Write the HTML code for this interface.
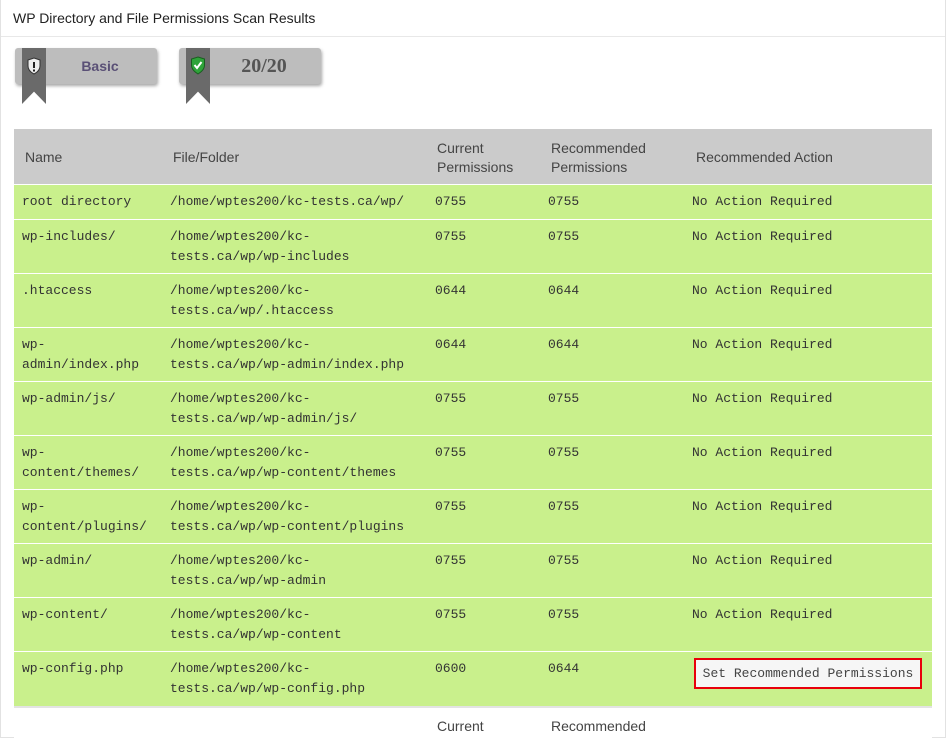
<!DOCTYPE html>
<html><head><meta charset="utf-8"><style>
*{margin:0;padding:0;box-sizing:border-box}
body{width:948px;height:723px;overflow:hidden;background:#fff;position:relative;font-family:"Liberation Sans",sans-serif}
.box{position:absolute;left:0;top:-2px;width:946px;height:740px;border:1px solid #e2e2e2;border-top:none}
.title{position:absolute;left:13px;top:10px;font-size:14px;color:#222}
.sep{position:absolute;left:1px;top:36px;width:944px;height:1px;background:#e8e8e8}
.badge{position:absolute;top:48px;width:142px;height:36px;background:#bdbdbd;border-radius:3px;box-shadow:1px 2px 3px rgba(0,0,0,.35)}
.rib{position:absolute;top:48px;width:24px;height:56px;background:#6a6a6a;clip-path:polygon(0 0,100% 0,100% 100%,50% 78%,0 100%)}
.btxt{position:absolute;top:0;height:36px;line-height:36px;left:28px;right:0;text-align:center}
.tbl{position:absolute;left:14px;top:129px;width:918px}
.hd{position:absolute;left:0;top:0;width:918px;height:55px;background:#cbcbcb;color:#444;font-size:14px}
.hd div,.ft div{position:absolute;line-height:19px}
.row{position:absolute;left:0;width:918px;background:#c9f08c;font-family:"Liberation Mono",monospace;font-size:13px;color:#333;line-height:20px}
.row div{position:absolute;top:7px}
.c1{left:8px;width:140px}.c2{left:156px;width:260px}.c3{left:421px}.c4{left:534px}.c5{left:678px}
.btn{position:absolute;left:680px;top:6px;width:228px;height:31px;border:2px solid #e8000b;background:#f6f6f6;font-family:"Liberation Mono",monospace;font-size:13px;color:#444;line-height:27px;text-align:center}
.ft{position:absolute;left:14px;top:706px;width:918px;height:40px;border-top:2px solid #e3e3e3;color:#444;font-size:14px;background:#fff}
</style></head><body>
<div class="box"></div>
<div class="title">WP Directory and File Permissions Scan Results</div>
<div class="sep"></div>
<div class="badge" style="left:15px"><div class="btxt" style="font-weight:bold;font-size:14px;color:#5a5076">Basic</div></div>
<div class="rib" style="left:22px"></div>
<svg style="position:absolute;left:26px;top:57px" width="16" height="18" viewBox="0 0 16 18"><path d="M8 1 L14 3 L14 9 C14 13 11 15.5 8 17 C5 15.5 2 13 2 9 L2 3 Z" fill="#eee" stroke="#333" stroke-width="1"/><rect x="7" y="5" width="2" height="6" fill="#222"/><rect x="7" y="12.5" width="2" height="2" fill="#222"/></svg>
<div class="badge" style="left:179px"><div class="btxt" style="font-family:'Liberation Serif',serif;font-weight:bold;font-size:20px;color:#555">20/20</div></div>
<div class="rib" style="left:186px"></div>
<svg style="position:absolute;left:190px;top:56px" width="16" height="19" viewBox="0 0 16 19"><path d="M8 1 L14.5 3 L14.5 9 C14.5 13.5 11 16 8 18 C5 16 1.5 13.5 1.5 9 L1.5 3 Z" fill="#2fa33a" stroke="#1a5e20" stroke-width="1"/><path d="M4.5 9 L7 12 L11.5 6" fill="none" stroke="#fff" stroke-width="2"/></svg>
<div class="tbl">
<div class="hd"><div style="left:11px;top:19px">Name</div><div style="left:159px;top:19px">File/Folder</div><div style="left:423px;top:10px">Current<br>Permissions</div><div style="left:537px;top:10px">Recommended<br>Permissions</div><div style="left:682px;top:19px">Recommended Action</div></div>
<div class="row" style="top:56px;height:34px"><div class="c1">root directory</div><div class="c2">/home/wptes200/kc-tests.ca/wp/</div><div class="c3">0755</div><div class="c4">0755</div><div class="c5">No Action Required</div></div>
<div class="row" style="top:91px;height:53px"><div class="c1">wp-includes/</div><div class="c2">/home/wptes200/kc-<br>tests.ca/wp/wp-includes</div><div class="c3">0755</div><div class="c4">0755</div><div class="c5">No Action Required</div></div>
<div class="row" style="top:145px;height:53px"><div class="c1">.htaccess</div><div class="c2">/home/wptes200/kc-<br>tests.ca/wp/.htaccess</div><div class="c3">0644</div><div class="c4">0644</div><div class="c5">No Action Required</div></div>
<div class="row" style="top:199px;height:53px"><div class="c1">wp-<br>admin/index.php</div><div class="c2">/home/wptes200/kc-<br>tests.ca/wp/wp-admin/index.php</div><div class="c3">0644</div><div class="c4">0644</div><div class="c5">No Action Required</div></div>
<div class="row" style="top:253px;height:53px"><div class="c1">wp-admin/js/</div><div class="c2">/home/wptes200/kc-<br>tests.ca/wp/wp-admin/js/</div><div class="c3">0755</div><div class="c4">0755</div><div class="c5">No Action Required</div></div>
<div class="row" style="top:307px;height:53px"><div class="c1">wp-<br>content/themes/</div><div class="c2">/home/wptes200/kc-<br>tests.ca/wp/wp-content/themes</div><div class="c3">0755</div><div class="c4">0755</div><div class="c5">No Action Required</div></div>
<div class="row" style="top:361px;height:53px"><div class="c1">wp-<br>content/plugins/</div><div class="c2">/home/wptes200/kc-<br>tests.ca/wp/wp-content/plugins</div><div class="c3">0755</div><div class="c4">0755</div><div class="c5">No Action Required</div></div>
<div class="row" style="top:415px;height:53px"><div class="c1">wp-admin/</div><div class="c2">/home/wptes200/kc-<br>tests.ca/wp/wp-admin</div><div class="c3">0755</div><div class="c4">0755</div><div class="c5">No Action Required</div></div>
<div class="row" style="top:469px;height:53px"><div class="c1">wp-content/</div><div class="c2">/home/wptes200/kc-<br>tests.ca/wp/wp-content</div><div class="c3">0755</div><div class="c4">0755</div><div class="c5">No Action Required</div></div>
<div class="row" style="top:523px;height:54px"><div class="c1">wp-config.php</div><div class="c2">/home/wptes200/kc-<br>tests.ca/wp/wp-config.php</div><div class="c3">0600</div><div class="c4">0644</div><span class="btn">Set Recommended Permissions</span></div>
</div>
<div class="ft"><div style="left:423px;top:9px">Current</div><div style="left:537px;top:9px">Recommended</div></div>
</body></html>
